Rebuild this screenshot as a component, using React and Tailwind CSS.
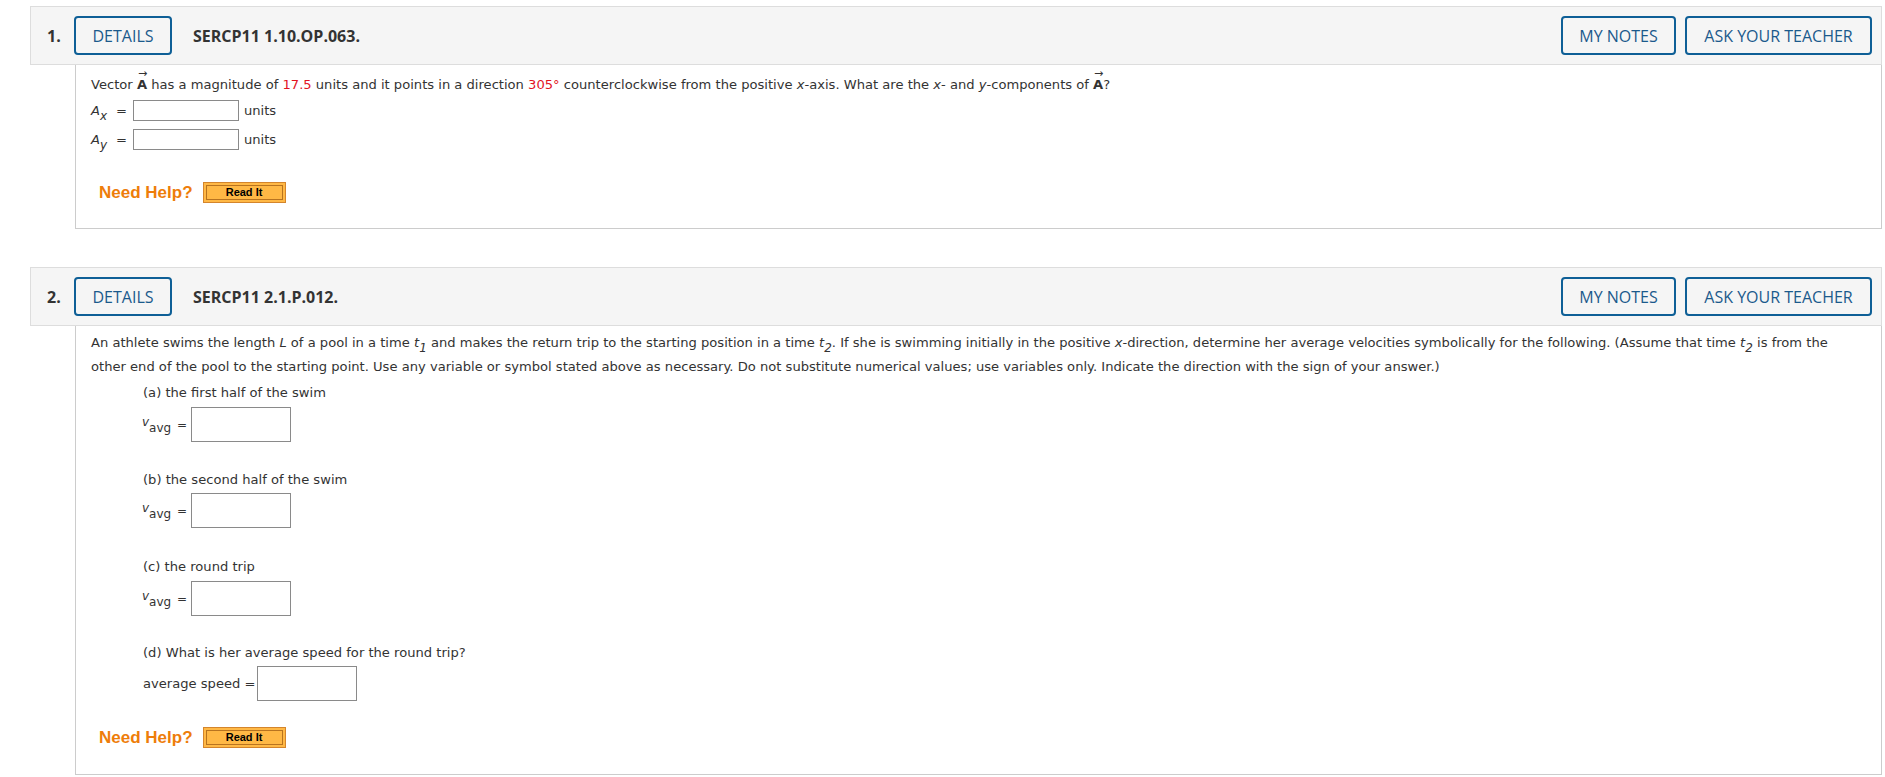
import React from "react";

const body = { fontFamily: '"DejaVu Sans", Verdana, sans-serif' };
const head = { fontFamily: '"Open Sans", Arial, sans-serif' };

function VecA() {
    return (
        <span className="relative inline-block font-bold">
            A
            <span className="absolute left-[1px] top-[-11px] text-[11px] font-normal">
                →
            </span>
        </span>
    );
}

function Header({ num, title }) {
    return (
        <div
            style={head}
            className="flex h-[59px] items-center border border-[#dddddd] bg-[#f5f5f5] pl-[16px] pr-[9px]">
            <span className="w-[27px] text-[16px] font-bold text-[#333]">{num}</span>
            <button className="h-[39px] w-[98px] rounded-[4px] border-2 border-[#0e5f96] text-[16px] text-[#1b5a8c]">
                DETAILS
            </button>
            <span className="ml-[21px] text-[16px] font-bold text-[#333]">{title}</span>
            <div className="ml-auto flex gap-[9px]">
                <button className="h-[39px] w-[115px] rounded-[4px] border-2 border-[#0e5f96] text-[16px] text-[#1b5a8c]">
                    MY NOTES
                </button>
                <button className="h-[39px] w-[187px] rounded-[4px] border-2 border-[#0e5f96] text-[16px] text-[#1b5a8c]">
                    ASK YOUR TEACHER
                </button>
            </div>
        </div>
    );
}

function NeedHelp() {
    return (
        <div className="flex h-[21px] items-center pl-[8px]" style={{ fontFamily: '"Liberation Sans", Arial, sans-serif' }}>
            <span className="text-[17px] font-bold leading-none text-[#ee7d0a]">Need Help?</span>
            <button className="ml-[10px] flex h-[21px] w-[83px] items-center justify-center border border-[#d4852c] bg-[#ffb845] p-[2px]">
                <span className="flex h-full w-full items-center justify-center border border-[#b8731f] text-[11px] font-bold leading-none text-black">
                    Read It
                </span>
            </button>
        </div>
    );
}

// italic letter with a lowered subscript that doesn't grow the line
function Sub({ v, s }) {
    return (
        <span className="italic">
            {v}
            <span className="relative top-[5px] text-[12px] leading-none">{s}</span>
        </span>
    );
}

function UnitRow({ label, sub, className }) {
    return (
        <div className={"flex h-[21px] items-center " + className}>
            <span className="w-[25px] leading-none">
                <Sub v={label} s={sub} />
            </span>
            <span className="w-[17px]">=</span>
            <input className="h-[21px] w-[106px] border border-[#8a8a8a] bg-white" />
            <span className="ml-[5px]">units</span>
        </div>
    );
}

function VRow({ className }) {
    return (
        <div className={"flex h-[35px] items-center pl-[51px] " + className}>
            <span className="w-[35px] text-[12px] leading-none">
                <span className="relative top-[-3px] italic">v</span>
                <span className="relative top-[3px]">avg</span>
            </span>
            <span className="w-[14px] text-[12px]">=</span>
            <input className="h-[35px] w-[100px] border border-[#8a8a8a] bg-white" />
        </div>
    );
}

export default function App() {
    return (
        <div className="min-h-[777px] w-full bg-white pt-[6px] pr-[3px] pl-[30px] text-[#333]">
            {/* question 1 */}
            <Header num="1." title="SERCP11 1.10.OP.063." />
            <div style={body} className="ml-[45px] border-r border-b border-l border-[#cccccc] pt-[8px] pb-[25px] pl-[15px] text-[13.1px]">
                <div className="h-[24px] leading-[24px]">
                    Vector <VecA /> has a magnitude of <span className="text-[#e2131f]">17.5</span> units and it points in a
                    direction <span className="text-[#e2131f]">305°</span> counterclockwise from the positive{" "}
                    <i>x</i>-axis. What are the <i>x</i>- and <i>y</i>-components of <VecA />?
                </div>
                <UnitRow label="A" sub="x" className="mt-[3px]" />
                <UnitRow label="A" sub="y" className="mt-[8px]" />
                <div className="mt-[32px]">
                    <NeedHelp />
                </div>
            </div>

            {/* question 2 */}
            <div className="mt-[38px]">
                <Header num="2." title="SERCP11 2.1.P.012." />
                <div style={body} className="ml-[45px] border-r border-b border-l border-[#cccccc] pt-[5px] pb-[26px] pl-[15px] text-[13.1px]">
                    <div className="leading-[24px]">
                        <div>
                            An athlete swims the length <i>L</i> of a pool in a time <Sub v="t" s="1" /> and makes the return trip to
                            the starting position in a time <Sub v="t" s="2" />. If she is swimming initially in the positive{" "}
                            <i>x</i>-direction, determine her average velocities symbolically for the following. (Assume that time{" "}
                            <Sub v="t" s="2" /> is from the
                        </div>
                        <div>
                            other end of the pool to the starting point. Use any variable or symbol stated above as necessary. Do not
                            substitute numerical values; use variables only. Indicate the direction with the sign of your answer.)
                        </div>
                    </div>
                    <div className="mt-[2px] h-[24px] pl-[52px] leading-[24px]">(a) the first half of the swim</div>
                    <VRow className="mt-[2px]" />
                    <div className="mt-[26px] h-[24px] pl-[52px] leading-[24px]">(b) the second half of the swim</div>
                    <VRow className="mt-[1px]" />
                    <div className="mt-[27px] h-[24px] pl-[52px] leading-[24px]">(c) the round trip</div>
                    <VRow className="mt-[2px]" />
                    <div className="mt-[25px] h-[24px] pl-[52px] leading-[24px]">(d) What is her average speed for the round trip?</div>
                    <div className="mt-[1px] flex h-[35px] items-center pl-[52px]">
                        <span>average speed =</span>
                        <input className="ml-[2px] h-[35px] w-[100px] border border-[#8a8a8a] bg-white" />
                    </div>
                    <div className="mt-[26px]">
                        <NeedHelp />
                    </div>
                </div>
            </div>
        </div>
    );
}
